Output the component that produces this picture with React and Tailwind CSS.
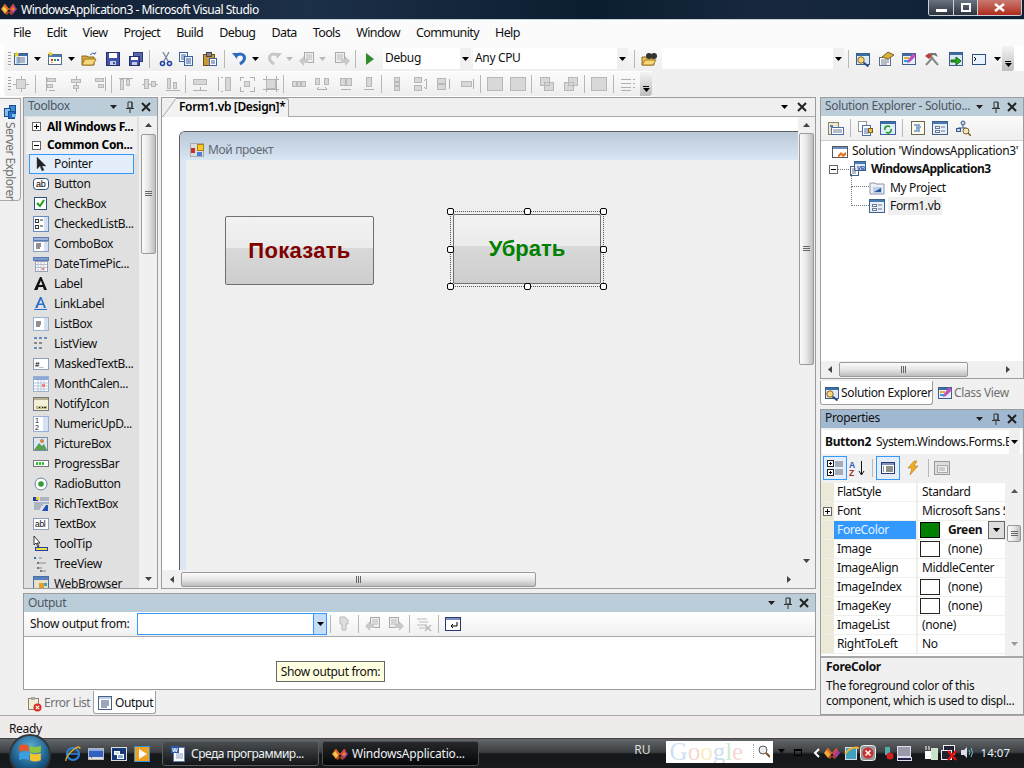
import React from "react";

const S = ({ w = 16, h = 16, children, className = "" }) => (
  <svg width={w} height={h} viewBox={`0 0 ${w} ${h}`} className={`shrink-0 ${className}`}>{children}</svg>
);
const R = (x, y, w, h, f, s) => <rect x={x} y={y} width={w} height={h} fill={f} stroke={s} shapeRendering="crispEdges" />;

const Dn = ({ c = "#000" }) => <S w={7} h={4}><path d="M0 0h7L3.5 4z" fill={c} /></S>;
const Up = ({ c = "#444" }) => <S w={7} h={4}><path d="M0 4h7L3.5 0z" fill={c} /></S>;
const Lf = ({ c = "#444" }) => <S w={4} h={7}><path d="M4 0v7L0 3.5z" fill={c} /></S>;
const Rt = ({ c = "#444" }) => <S w={4} h={7}><path d="M0 0v7l4-3.5z" fill={c} /></S>;
const Pin = () => <S w={10} h={12}><path d="M3 1h4v6H3zM1 7.5h8M5 8v4M7 1v6" stroke="#333" fill="none" strokeWidth="1" /></S>;
const X = () => <S w={10} h={10}><path d="M1 1l8 8M9 1l-8 8" stroke="#222" strokeWidth="2" /></S>;

const Vs = () => (
  <S w={16} h={12}>
    <path d="M0 6l4-5 4 5-4 5z" fill="#f2a93b" />
    <path d="M2 6l2-2.5L6 6l-2 2.5z" fill="#f7d65a" />
    <path d="M8 6l4-5 4 5-4 5z" fill="#a83a9c" />
    <path d="M10 6l2-2.5L14 6l-2 2.5z" fill="#e8871e" />
    <path d="M4 1l8 10-2 1-8-10zM12 1L4 11l2 1 8-10z" fill="#d9541e" opacity=".8" />
  </S>
);

const Win = ({ t = "#3a6ea5", b = "#e8f0fa" }) => <>{R(1.5, 2.5, 13, 11, b, "#3e5f8a")}{R(2, 3, 12, 2, t)}</>;
const Lines = () => <path d="M4 7h8M4 9h8M4 11h8" stroke="#6a7a90" />;

const I = {
  newp: <S><Win />{R(3, 6, 4, 7, "#b8d0ea")}<Lines /><path d="M3 0l1 2 2 0-1 2 1 2-2-1-2 1 0-2-1-1 2-1z" fill="#f5d020" /></S>,
  add: <S>{R(1.5, 3.5, 13, 10, "#fff", "#5a6e88")}{R(2, 4, 12, 2, "#4a7ab0")}{R(4, 8, 2, 2, "#d03030")}{R(7, 8, 2, 2, "#30a030")}{R(10, 8, 2, 2, "#3060d0")}{R(4, 11, 2, 1, "#e0a020")}<path d="M3 0l1 2 2 0-1 2-2 1-1-2-1-1 2-1z" fill="#f5d020" /></S>,
  open: <S><path d="M1 5h5l1 1h6v8H1z" fill="#d9a83a" stroke="#8a6a20" /><path d="M1 14l3-6h11l-3 6z" fill="#f6d77a" stroke="#a07a20" /><path d="M9 4q2-3 5-1M14 3l1-2M14 3l-2-1" stroke="#4a6fa5" fill="none" /></S>,
  save: <S>{R(1.5, 1.5, 13, 13, "#3f51a8", "#24306e")}{R(4, 2, 8, 5, "#fff")}{R(5, 10, 6, 4, "#c6cde0")}{R(8, 11, 2, 2, "#3f51a8")}</S>,
  saveall: <S>{R(5.5, 1.5, 9, 9, "#5a68b0", "#2c3878")}{R(1.5, 5.5, 10, 9, "#3f51a8", "#24306e")}{R(3, 6, 7, 3, "#fff")}{R(4, 11, 5, 3, "#c6cde0")}</S>,
  cut: <S><path d="M5 1l5 9M11 1L6 10" stroke="#7a8aa0" strokeWidth="1.4" /><circle cx="4.5" cy="12.5" r="2" fill="none" stroke="#2040a0" strokeWidth="1.6" /><circle cx="11.5" cy="12.5" r="2" fill="none" stroke="#2040a0" strokeWidth="1.6" /></S>,
  copy: <S>{R(1.5, 1.5, 8, 9, "#fff", "#3a5f9a")}<path d="M3 4h5M3 6h5M3 8h5" stroke="#3a5f9a" />{R(6.5, 5.5, 8, 9, "#eaf2ff", "#3a5f9a")}<path d="M8 8h5M8 10h5M8 12h5" stroke="#3a5f9a" /></S>,
  paste: <S>{R(1.5, 3.5, 11, 11, "#c89a3c", "#6a5020")}{R(4, 1, 5, 4, "#888", "#444")}{R(7.5, 7.5, 7, 7, "#fff", "#3a5f9a")}<path d="M9 10h4M9 12h4" stroke="#3a5f9a" /></S>,
  undo: <S><path d="M3 5q6-4 9 0q2 4-4 8" stroke="#2c6cc0" strokeWidth="3" fill="none" /><path d="M0 2l6 0 -1 6z" fill="#2c6cc0" /></S>,
  redo: <S><path d="M13 5q-6-4-9 0q-2 4 4 8" stroke="#c4c8c8" strokeWidth="3" fill="none" /><path d="M16 2l-6 0 1 6z" fill="#c4c8c8" /></S>,
  back: <S>{R(5.5, 1.5, 9, 10, "#eee", "#aaa")}<path d="M7 4h6M7 6h6M7 8h6" stroke="#bbb" /><path d="M0 10l5-5v3h4v4H5v3z" fill="#c8c8c8" /></S>,
  fwd: <S>{R(1.5, 1.5, 9, 10, "#eee", "#aaa")}<path d="M3 4h6M3 6h6M3 8h6" stroke="#bbb" /><path d="M16 10l-5-5v3H7v4h4v3z" fill="#c8c8c8" /></S>,
  play: <S w={8} h={12}><path d="M0 0l8 6-8 6z" fill="#2e8b2e" /></S>,
  find: <S><path d="M1 6h5l1 1h6v7H1z" fill="#e8c050" stroke="#8a6a20" /><path d="M1 14l3-5h11l-3 5z" fill="#f6d77a" stroke="#a07a20" /><circle cx="8" cy="5" r="3" fill="#333" /><circle cx="13" cy="5" r="3" fill="#333" /></S>,
  sfind: <S><Win />{R(2, 6, 12, 7, "#dce8f8")}<circle cx="6" cy="9" r="3.2" fill="#f6d77a" stroke="#8a6a20" /><path d="M8.5 11.5l5 4" stroke="#2a4a80" strokeWidth="2" /></S>,
  server: <S>{R(7.5, 1.5, 6, 8, "#3a90d8", "#1e4a90")}{R(2.5, 4.5, 6, 8, "#8abce8", "#1e4a90")}{R(6.5, 7.5, 6, 7, "#2a70c0", "#1e4a90")}{R(10, 10, 4, 3, "#7ac0f0")}</S>,
  props: <S>{R(1.5, 6.5, 11, 8, "#fff", "#5a6e88")}<path d="M3 9h8M3 11h8M3 13h6" stroke="#6a7a90" /><path d="M4 6l6-5 6 3-6 4z" fill="#d8b040" stroke="#806020" /></S>,
  tb: <S><Win />{R(3, 6, 5, 2, "#e0b030")}{R(3, 9, 5, 2, "#30a0e0")}<path d="M12 2l3 3-6 6-3 1 1-3z" fill="#c050c0" /></S>,
  tools: <S><path d="M2 14l7-8M14 14L7 6" stroke="#888" strokeWidth="2" /><path d="M6 2h6l2 4-4-2-4 1z" fill="#777" /><path d="M1 5l4-3 3 3-3 3z" fill="#b84030" /></S>,
  immed: <S>{R(1.5, 1.5, 13, 13, "#dce8f8", "#3e5f8a")}{R(2, 2, 12, 2, "#3a6ea5")}<path d="M3 9h5V6l5 4-5 4v-3H3z" fill="#22aa22" stroke="#0a6a0a" /></S>,
  cmd: <S>{R(1.5, 3.5, 13, 10, "#eaf2fc", "#2a4f80")}{R(2, 4, 2, 9, "#fff")}<path d="M3 6l2 2-2 2" stroke="#000" fill="none" /></S>,
  pointer: <S><path d="M4 1v12l3-3 2 5 2-1-2-4h4z" fill="#222" stroke="#555" strokeWidth=".5" /></S>,
  ab: <S><rect x=".5" y="2.5" width="15" height="11" rx="3" fill="#fff" stroke="#2a4a80" /><text x="3" y="11" fontSize="9" fill="#000" fontFamily="Liberation Sans">ab</text></S>,
  check: <S>{R(1.5, 1.5, 12, 12, "#fff", "#2a4f80")}<path d="M4 7l3 3 4-6" stroke="#18a018" strokeWidth="2" fill="none" /></S>,
  clb: <S>{R(.5, .5, 15, 15, "#fff", "#6a8ac0")}{R(2, 3, 3, 3, "#fff", "#333")}{R(2, 9, 3, 3, "#fff", "#333")}{R(11, 1, 4, 14, "#d4e0f4")}<path d="M7 4h3M7 10h3" stroke="#333" /></S>,
  combo: <S>{R(.5, 1.5, 15, 3, "#9ab4dc", "#5a7ab0")}{R(.5, 5.5, 15, 10, "#fff", "#8aa0c0")}<path d="M3 8h5M3 10h5M3 12h4" stroke="#222" />{R(11, 6, 4, 9, "#d4e0f4")}</S>,
  dtp: <S>{R(.5, 1.5, 15, 3, "#7a9ad0", "#5a7ab0")}{R(2.5, 5.5, 12, 10, "#fff", "#9aa0b0")}<path d="M5 6v9M8 6v9M11 6v9M3 8.5h11M3 11.5h11" stroke="#b8c0d0" />{R(9, 12, 2, 2, "#f08070")}</S>,
  label: <S><path d="M1 14L7 1h1.5L14 14h-3l-1-3H5.5l-1 3zM6 9h3.5L8 4.5z" fill="#111" /></S>,
  link: <S><path d="M2 12L7 1h1.5L13 12h-2l-1-3H5.5l-1 3zM6 7.5h3.5L8 3.5z" fill="#2a70c8" />{R(1, 13, 13, 1, "#2a70c8")}</S>,
  listb: <S>{R(.5, 1.5, 15, 13, "#fff", "#9ab0d0")}<path d="M3 6h5M3 8h5M3 10h4" stroke="#222" />{R(11, 2, 4, 12, "#d4e0f4")}</S>,
  listv: <S>{R(1, 1, 3, 2, "#6a8ac0")}{R(6, 1, 3, 2, "#6a8ac0")}{R(11, 1, 3, 2, "#6a8ac0")}{R(1, 6, 3, 2, "#888")}{R(6, 6, 3, 2, "#888")}{R(1, 11, 3, 2, "#6a8ac0")}{R(6, 11, 3, 2, "#888")}</S>,
  mask: <S>{R(.5, 2.5, 15, 11, "#fff", "#8aa0c0")}<text x="2" y="11" fontSize="8" fontWeight="bold" fill="#111" fontFamily="Liberation Sans">#_</text></S>,
  month: <S>{R(.5, .5, 15, 15, "#fff", "#9ab0d0")}{R(1, 1, 14, 3, "#90a8d8")}<path d="M5 4v11M8 4v11M11 4v11M1 7h14M1 10h14M1 13h14" stroke="#b8c4dc" />{R(9, 8, 3, 3, "#f08070")}</S>,
  notify: <S>{R(.5, 1.5, 15, 13, "#f4f0d8", "#777")}{R(1, 2, 14, 2, "#b8b090")}{R(3, 10, 11, 3, "#c0b888")}{R(6, 11, 1, 1, "#222")}{R(9, 11, 1, 1, "#222")}{R(11, 11, 2, 1, "#222")}</S>,
  numeric: <S>{R(.5, .5, 15, 15, "#fff", "#9ab0d0")}<text x="2" y="7" fontSize="7" fill="#111" fontFamily="Liberation Sans">1</text><text x="2" y="14" fontSize="7" fill="#111" fontFamily="Liberation Sans">2</text>{R(10, 1, 5, 14, "#d4e0f4")}</S>,
  pic: <S>{R(.5, 1.5, 14, 13, "#d8e8f4", "#7a8aa0")}<path d="M1 14l5-7 3 3 2-2 3 6z" fill="#5aa050" /><circle cx="9" cy="5" r="2" fill="#e08040" /></S>,
  prog: <S>{R(.5, 4.5, 15, 6, "#fff", "#777")}{R(3, 6, 2, 3, "#30c030")}{R(6, 6, 2, 3, "#30c030")}{R(9, 6, 2, 3, "#30c030")}</S>,
  radio: <S><circle cx="8" cy="8" r="6" fill="#fff" stroke="#6a80a0" /><circle cx="8" cy="8" r="2.8" fill="#30a030" /></S>,
  rich: <S>{R(0, 1, 5, 4, "#2040a0")}{R(3, 1, 3, 3, "#f0d020")}<path d="M7 2h9M7 4h9M1 7h15M1 9h9M1 11h7M1 13h6" stroke="#7a8aa8" /><path d="M9 15l4-6h2v6z" fill="#2050b0" /></S>,
  text: <S>{R(.5, 2.5, 15, 11, "#fff", "#8aa0c0")}<text x="2" y="11" fontSize="8.5" fill="#111" fontFamily="Liberation Sans">abl</text></S>,
  tip: <S><path d="M1 0v9l2-2 2 4 1-1-2-3h3z" fill="#fff" stroke="#111" strokeWidth=".8" />{R(2.5, 11.5, 12, 3, "#f0e040", "#2040a0")}</S>,
  tree: <S>{R(1, 1, 2, 2, "#3a6ab0")}<path d="M6 2h3M6 7h7M6 12h3M9 15h4" stroke="#888" />{R(4, 6, 2, 2, "#778")}{R(4, 11, 2, 2, "#778")}{R(7, 14, 2, 2, "#778")}</S>,
  web: <S>{R(.5, .5, 15, 15, "#e8e0c8", "#4a6fa5")}{R(1, 1, 14, 3, "#5a80c0")}{R(6, 7, 5, 6, "#e0a030")}{R(11, 7, 3, 3, "#40a0d0")}</S>,
  slnp: <S>{R(.5, 2.5, 10, 12, "#f0e8c8", "#8a8468")}{R(2, 5, 3, 2, "#5a80c0")}{R(3.5, 7.5, 12, 7, "#fff", "#4a6fa5")}<path d="M5 10h9M5 12h9" stroke="#6a7a90" /></S>,
  showall: <S>{R(1.5, 1.5, 8, 10, "#fff", "#999")}{R(5.5, 5.5, 8, 10, "#fff", "#4a6fa5")}<path d="M7 9h5M7 11h5M7 13h5" stroke="#4a6fa5" />{R(11, 8, 4, 4, "#e8c050", "#806020")}</S>,
  refresh: <S>{R(.5, 1.5, 15, 13, "#e0ecf8", "#3a5f9a")}{R(1, 2, 14, 2, "#3a6ea5")}<path d="M5 10a3 3 0 0 1 5-3M11 9a3 3 0 0 1-5 3" stroke="#20a020" strokeWidth="1.6" fill="none" /></S>,
  code: <S>{R(1.5, 1.5, 13, 13, "#fdf8e8", "#6a6a50")}<path d="M4 5h6M6 7h5M6 9h4M4 11h6" stroke="#2060c0" /></S>,
  form: <S>{R(.5, 1.5, 15, 13, "#e8eef8", "#3e5f8a")}{R(1, 2, 14, 2, "#4a7ab0")}{R(3, 6, 4, 2, "#fff", "#6a7a90")}{R(3, 10, 4, 2, "#fff", "#6a7a90")}<path d="M9 7h4M9 11h4" stroke="#6a7a90" /></S>,
  cls: <S><circle cx="8" cy="3" r="2" fill="#c8d4e8" stroke="#3a5a90" />{R(1, 8, 4, 3, "#c8d4e8", "#3a5a90")}<path d="M8 5v3H3M8 8h3" stroke="#3a5a90" fill="none" /><circle cx="11" cy="11" r="3" fill="#f0e8c0" stroke="#806020" /><path d="M13 13l3 3" stroke="#806020" strokeWidth="1.5" /></S>,
  sln: <S>{R(.5, 3.5, 15, 11, "#fff", "#555")}{R(1, 4, 14, 2, "#6a90c8")}<path d="M6 12l3-3 2 2 3-2v3l-3 2-2-2-3 3z" fill="#e0701e" /></S>,
  proj: <S>{R(.5, 5.5, 8, 9, "#fff", "#3e5f8a")}{R(4.5, .5, 11, 9, "#dce8f8", "#3e5f8a")}{R(5, 1, 10, 2, "#4a7ab0")}<text x="7" y="9" fontSize="6" fontWeight="bold" fill="#2040a0" fontFamily="Liberation Sans">VB</text><path d="M2 8h4M2 10h4M2 12h4" stroke="#6a7a90" /></S>,
  myp: <S><path d="M1 3h5l1 1h8v10H1z" fill="#eef0f4" stroke="#8a94a8" />{R(4, 7, 9, 6, "#bcd0ea")}<path d="M5 12l7-4v4z" fill="#2a5aa0" /></S>,
  cat: <S>{R(.5, .5, 6, 6, "#fff", "#222")}{R(.5, 9.5, 6, 6, "#fff", "#222")}{R(2, 3, 3, 1, "#000")}{R(3, 2, 1, 3, "#000")}{R(2, 12, 3, 1, "#000")}{R(3, 11, 1, 3, "#000")}<path d="M8 2h8M8 4h8M8 6h8M8 10h8M8 12h8M8 14h8" stroke="#667" /></S>,
  az: <S><text x="0" y="7.5" fontSize="8.5" fontWeight="bold" fill="#2a5ab8" fontFamily="Liberation Sans">A</text><text x="0" y="15.5" fontSize="8.5" fontWeight="bold" fill="#a03020" fontFamily="Liberation Sans">Z</text><path d="M12.5 1v13M10 11l2.5 4 2.5-4" stroke="#111" fill="none" /></S>,
  plist: <S>{R(1.5, 2.5, 13, 11, "#fff", "#2a3a70")}{R(2, 3, 12, 2, "#7a90c0")}<path d="M6 7h7M6 9h7M6 11h7M3 7h1M3 9h1M3 11h1" stroke="#222" /></S>,
  bolt: <S><path d="M9 1L3 8h4l-2 7 8-9H9l3-5z" fill="#e8b020" stroke="#c07020" strokeWidth=".6" /></S>,
  ppage: <S>{R(.5, 1.5, 15, 13, "#ddd", "#999")}{R(3, 5, 10, 7, "#eee", "#aaa")}<path d="M5 8h6M5 10h6" stroke="#aaa" /></S>,
  errl: <S>{R(2.5, 2.5, 10, 11, "#f2ecd8", "#8a8468")}{R(5, 1, 4, 3, "#aaa")}<circle cx="11.5" cy="11.5" r="4" fill="#d83020" /><path d="M9.8 9.8l3.4 3.4M13.2 9.8l-3.4 3.4" stroke="#fff" strokeWidth="1.2" /></S>,
  outp: <S>{R(1.5, 1.5, 13, 13, "#fff", "#4a5f88")}{R(2, 2, 12, 2, "#bcd0ea")}<path d="M4 6h8M4 8h8M4 10h8M4 12h6" stroke="#3a4a78" /></S>,
  o1: <S><path d="M4 1h5l3 3v4h-2v6H6V8H4z" fill="#ddd" stroke="#bbb" /></S>,
  o4: <S><path d="M1 3h10M3 6h9M1 9h10M3 12h8" stroke="#bbb" /><path d="M9 9l6 6M15 9l-6 6" stroke="#bbb" strokeWidth="1.6" /></S>,
  o5: <S>{R(.5, 1.5, 15, 13, "#fff", "#2a3a70")}{R(1, 2, 14, 2, "#7a90c0")}<path d="M12 6v4H6M8 8l-2 2 2 2" stroke="#000" fill="none" /></S>,
  word: <S>{R(2.5, 1.5, 11, 14, "#fff", "#5a7ab0")}<path d="M5 8h7M5 10h7M5 12h7" stroke="#8a9ab8" />{R(0, 0, 8, 7, "#2a5ab0")}<text x="1" y="6" fontSize="6" fontWeight="bold" fill="#fff" fontFamily="Liberation Sans">W</text></S>,
  ie: <S><ellipse cx="8" cy="8" rx="6" ry="6" fill="none" stroke="#2a80d8" strokeWidth="2.2" /><path d="M2 8h11" stroke="#2a80d8" strokeWidth="1.6" /><path d="M1 15Q0 11 9 3Q15-1 15 3" stroke="#e8b020" fill="none" strokeWidth="1.3" /></S>,
  desk: <S>{R(.5, 1.5, 15, 13, "#163a78", "#ddd")}{R(3, 5, 5, 3, "#cde", "#fff")}{R(6, 8, 6, 4, "#8ac", "#fff")}</S>,
  sw: <S>{R(.5, 2.5, 15, 11, "#3060c0", "#bbb")}{R(1, 3, 14, 2, "#88aae0")}{R(1, 11, 14, 2, "#ddd")}{R(3, 11, 1, 1, "#c33")}</S>,
  wmp: <S>{R(.5, .5, 15, 15, "#f0a020", "#3a90d0")}<path d="M5 3l8 5-8 5z" fill="#fff" /></S>,
  traya: <S><path d="M0 8l4-5 4 5-4 5z" fill="#f2a93b" /><path d="M8 8l4-5 4 5-4 5z" fill="#a83a9c" /><path d="M4 3l8 10-2 1-8-10zM12 3L4 13l2 1 8-10z" fill="#d9541e" opacity=".8" /></S>,
  trayb: <S>{R(2, 2, 11, 12, "#40a0c0", "#ddd")}<path d="M2 9q6-8 14-6" stroke="#f0b030" strokeWidth="2" fill="none" /></S>,
  trayc: <S><rect x=".5" y=".5" width="15" height="15" rx="3" fill="#999" stroke="#eee" /><circle cx="8" cy="8" r="5.5" fill="#c83030" /><path d="M5.5 5.5l5 5M10.5 5.5l-5 5" stroke="#fff" strokeWidth="1.5" /></S>,
  trayd: <S w={11}><path d="M2 2h5v8H2z" fill="#5aa" /><circle cx="7" cy="11" r="3.5" fill="#d02020" /></S>,
  traye: <S>{R(1.5, 1.5, 13, 10, "#99a", "#dde")}{R(1, 12, 14, 3, "#224", "#dde")}</S>,
  trayf: <S><path d="M3 1v4M6 1v4" stroke="#fff" />{R(1.5, 5.5, 7, 8, "#fff")}{R(8.5, 3.5, 6, 11, "#bfe8c0", "#ddd")}</S>,
  trayg: <S>{R(2.5, .5, 11, 9, "#223", "#eee")}{R(.5, 5.5, 10, 9, "#223", "#eee")}<path d="M7 6l8 9M15 6l-8 9" stroke="#e01010" strokeWidth="2.4" /></S>,
  trayh: <S w={14}><path d="M1 5h3l3-3v11l-3-3H1z" fill="#dde" /><path d="M9 5q2 2.5 0 5M11 3q3 4.5 0 9" stroke="#6ac0d0" fill="none" /></S>,
};

const Gr = ({ a, b }) => (
  <S>
    {a && <path d={a} stroke="#b0b0b0" fill="none" shapeRendering="crispEdges" />}
    {b && <path d={b} fill="#d8d8d8" stroke="#b8b8b8" shapeRendering="crispEdges" />}
  </S>
);
const G = {
  a: <Gr a="M8 0v16M0 8h16" b="M3.5 3.5h9v9h-9z" />,
  l: <Gr a="M2 1v14M5 14h6" b="M3.5 2.5h8v3h-8zM3.5 8.5h5v3h-5z" />,
  c: <Gr a="M8 0v16" b="M3.5 3.5h9v3h-9zM5.5 9.5h5v3h-5z" />,
  r: <Gr a="M14 1v14" b="M4.5 2.5h8v3h-8zM7.5 8.5h5v3h-5z" />,
  t: <Gr a="M1 2h14" b="M2.5 3.5h3v10h-3zM8.5 3.5h3v6h-3z" />,
  m: <Gr a="M0 8h16" b="M2.5 3.5h4v9h-4zM9.5 5.5h4v5h-4z" />,
  o: <Gr a="M1 14h14" b="M2.5 2.5h3v10h-3zM8.5 6.5h3v6h-3z" />,
  w: <Gr a="M1 14h14M8 11v4" b="M1.5 3.5h13v5h-13z" />,
  h: <Gr a="M2 1v14M5 1h2M5 15h2" b="M9.5 1.5h5v13h-5z" />,
  s: <Gr a="M1 1h4M1 1v4M11 1h4M15 1v4M1 11v4h4M15 11v4h-4" b="M5.5 5.5h5v5h-5z" />,
  b: <Gr a="M0 3h16M0 13h16M3 0v16M13 0v16" b="M3.5 3.5h9v9h-9z" />,
  e1: <Gr b="M1.5 5.5h4v5h-4zM6.5 5.5h3v5h-3zM10.5 5.5h4v5h-4z" />,
  e2: <Gr a="M3 13h10M3 13l2-2M13 13l-2-2" b="M1.5 2.5h4v6h-4zM10.5 2.5h4v6h-4z" />,
  e3: <Gr a="M3 13h10" b="M2.5 2.5h5v7h-5zM8.5 2.5h5v7h-5z" />,
  e4: <Gr a="M3 13h10" b="M5.5 1.5h5v9h-5z" />,
  v1: <Gr b="M5.5 1.5h5v4h-5zM5.5 6.5h5v3h-5zM5.5 10.5h5v4h-5z" />,
  v2: <Gr a="M13 3v10M13 3l-2 2M13 13l-2-2" b="M1.5 1.5h7v5h-7zM1.5 9.5h7v5h-7z" />,
  v3: <Gr a="M13 3v10" b="M1.5 2.5h8v5h-8zM1.5 8.5h8v5h-8z" />,
  v4: <Gr a="M13 3v10" b="M1.5 5.5h10v5h-10z" />,
  p1: <Gr a="M0 8h16" b="M.5 1.5h15v13h-15z" />,
  p2: <Gr a="M8 1v14M0 8h16" b="M.5 1.5h15v13h-15z" />,
  f1: <Gr b="M1.5 1.5h9v8h-9zM5.5 6.5h9v8h-9z" />,
  f2: <Gr b="M5.5 1.5h9v8h-9zM1.5 6.5h9v8h-9z" />,
  g: <Gr a="M1 5h14M1 8h14M1 11h14" b="M.5 1.5h15v13h-15z" />,
  n: <Gr a="M1 3h10M1 7h10M1 11h10M1 14h10M13 3h2M13 7h2M13 11h2" />,
};

const Sep = ({ c = "" }) => <div className={`w-px h-[18px] bg-[#b8b8b8] shrink-0 ${c}`} />;
const Grip = () => (
  <div className="w-[3px] h-[14px] shrink-0 bg-[repeating-linear-gradient(180deg,#a0a0a0_0,#a0a0a0_1px,transparent_1px,transparent_3px)]" />
);
const More = ({ c = "" }) => (
  <div className={`w-[12px] self-stretch rounded-r-[3px] bg-linear-to-b from-[#f4f4f4] to-[#bdbdbd] flex flex-col items-center justify-end pb-[4px] shrink-0 ${c}`}>
    <div className="w-[6px] h-px bg-black mb-px" />
    <Dn />
  </div>
);

const Combo = ({ w, label, c = "" }) => (
  <div className={`h-[21px] bg-white flex items-center shrink-0 ${w} ${c}`}>
    <span className="flex-1 pl-[2px] text-[12px] -mt-[2px]">{label}</span>
    <div className="w-[11px] h-full bg-[#f0f0f0] flex items-center justify-center"><Dn /></div>
  </div>
);

function TitleBar() {
  return (
    <div className="h-[20px] shrink-0 flex items-start bg-[linear-gradient(90deg,#101c30,#1c3048_30%,#0b1d30_58%,#18293f_75%,#0c1f34)] border-b border-[#c9d3dc] text-white">
      <div className="pl-px pt-[3px]"><Vs /></div>
      <span className="ml-[4px] text-[12px] tracking-[-0.5px] leading-[19px]">WindowsApplication3 - Microsoft Visual Studio</span>
      <div className="ml-auto mr-[2px] flex h-[16px] w-[94px] rounded-b-[3px] border border-t-0 border-[#c8d0d8] overflow-hidden">
        <div className="w-[25px] bg-linear-to-b from-[#6a7480] to-[#2c3440] flex items-end justify-center pb-[3px] border-r border-[#c8d0d8]"><div className="w-[11px] h-[3px] bg-white" /></div>
        <div className="w-[24px] bg-linear-to-b from-[#6a7480] to-[#2c3440] flex items-center justify-center border-r border-[#c8d0d8]"><div className="w-[10px] h-[9px] border-2 border-white" /></div>
        <div className="flex-1 bg-linear-to-b from-[#c87870] to-[#b02818] flex items-center justify-center"><S w={11} h={9}><path d="M1 1l9 7M10 1l-9 7" stroke="#fff" strokeWidth="2.4" /></S></div>
      </div>
    </div>
  );
}

function MenuBar() {
  return (
    <div className="h-[26px] shrink-0 bg-[#fbfbfb] flex items-center pl-[13px] gap-[16px] text-[12.5px] tracking-[-0.6px] text-[#111] pt-px">
      {["File", "Edit", "View", "Project", "Build", "Debug", "Data", "Tools", "Window", "Community", "Help"].map((m) => <span key={m}>{m}</span>)}
    </div>
  );
}

function Toolbar1() {
  return (
    <div className="h-[25px] shrink-0 bg-white pl-[4px] pr-[10px]">
      <div className="h-full flex items-center pl-[4px] rounded-l-[3px] bg-linear-to-b from-[#fbfbfb] to-[#eeeeee]">
        <Grip />
        <span className="ml-[2px]">{I.newp}</span>
        <span className="ml-[5px]"><Dn /></span>
        <span className="ml-[6px]">{I.add}</span>
        <span className="ml-[5px]"><Dn /></span>
        <span className="ml-[6px]">{I.open}</span>
        <span className="ml-[8px]">{I.save}</span>
        <span className="ml-[7px]">{I.saveall}</span>
        <Sep c="ml-[5px]" />
        <span className="ml-[8px]">{I.cut}</span>
        <span className="ml-[4px]">{I.copy}</span>
        <span className="ml-[8px]">{I.paste}</span>
        <Sep c="ml-[6px]" />
        <span className="ml-[7px]">{I.undo}</span>
        <span className="ml-[4px]"><Dn /></span>
        <span className="ml-[7px]">{I.redo}</span>
        <span className="ml-[4px]"><Dn c="#bbb" /></span>
        <span className="ml-[6px]">{I.back}</span>
        <span className="ml-[4px]"><Dn c="#bbb" /></span>
        <span className="ml-[8px]">{I.fwd}</span>
        <Sep c="ml-[5px]" />
        <span className="ml-[10px]">{I.play}</span>
        <Combo w="w-[88px]" label="Debug" c="ml-[9px]" />
        <Combo w="w-[155px]" label="Any CPU" c="ml-[2px]" />
        <Sep c="ml-[6px]" />
        <span className="ml-[6px]">{I.find}</span>
        <Combo w="w-[182px]" label="" c="ml-[5px]" />
        <Sep c="ml-[4px]" />
        <span className="ml-[6px]">{I.sfind}</span>
        <span className="ml-[7px]">{I.props}</span>
        <span className="ml-[7px]">{I.tb}</span>
        <span className="ml-[7px]">{I.tools}</span>
        <span className="ml-[8px]">{I.immed}</span>
        <span className="ml-[7px]">{I.cmd}</span>
        <span className="ml-[7px]"><Dn /></span>
        <More c="ml-auto" />
      </div>
    </div>
  );
}

const Group = ({ items }) => <div className="flex gap-[7.5px] shrink-0">{items.map((k, i) => <span key={i}>{G[k]}</span>)}</div>;

function Toolbar2() {
  return (
    <div className="h-[26px] shrink-0 bg-white pl-[4px] w-[652px] pt-[1px]">
      <div className="h-[24px] flex items-center pl-[4px] rounded-[3px] bg-linear-to-b from-[#fbfbfb] to-[#eeeeee]">
        <Grip />
        <span className="ml-[2px]"><Group items={["a"]} /></span>
        <Sep c="ml-[6px] mr-[8px]" />
        <Group items={["l", "c", "r"]} />
        <Sep c="ml-[4px] mr-[6px]" />
        <Group items={["t", "m", "o"]} />
        <Sep c="ml-[4px] mr-[6px]" />
        <Group items={["w", "h", "s", "b"]} />
        <Sep c="ml-[4px] mr-[7px]" />
        <Group items={["e1", "e2", "e3", "e4"]} />
        <Sep c="ml-[4px] mr-[7px]" />
        <Group items={["v1", "v2", "v3", "v4"]} />
        <Sep c="ml-[4px] mr-[6px]" />
        <Group items={["p1", "p2"]} />
        <Sep c="ml-[5px] mr-[7px]" />
        <Group items={["f1", "f2"]} />
        <Sep c="ml-[5px] mr-[6px]" />
        <Group items={["g"]} />
        <Sep c="ml-[6px] mr-[6px]" />
        <Group items={["n"]} />
        <More c="ml-auto" />
      </div>
    </div>
  );
}

const Header = ({ title, active, arrow = true, t = "-mt-[2px]" }) => (
  <div className={`h-[18px] shrink-0 flex items-center pl-[4px] text-[12px] ${active ? "bg-[#a0b8d0] text-[#111]" : "bg-[#bccdda] text-[#4c5763]"}`}>
    <span className={`flex-1 min-w-0 whitespace-nowrap ${t}`}>{title}</span>
    {arrow && <Dn c="#222" />}
    <span className="ml-[8px]"><Pin /></span>
    <span className="ml-[6px] mr-[6px]"><X /></span>
  </div>
);

const Thumb = "bg-linear-to-r from-[#fbfbfb] via-[#e6e6e6] to-[#bdbdbd] border border-[#9a9a9a] rounded-[2px]";
const ThumbH = "bg-linear-to-b from-[#fbfbfb] via-[#e6e6e6] to-[#bdbdbd] border border-[#9a9a9a] rounded-[2px]";
const GripV = () => <div className="w-[7px] h-[6px] bg-[repeating-linear-gradient(180deg,#666_0,#666_1px,transparent_1px,transparent_2px)]" />;
const GripH = () => <div className="w-[6px] h-[7px] bg-[repeating-linear-gradient(90deg,#666_0,#666_1px,transparent_1px,transparent_2px)]" />;

const toolbox = [
  ["pointer", "Pointer"], ["ab", "Button"], ["check", "CheckBox"], ["clb", "CheckedListB..."], ["combo", "ComboBox"],
  ["dtp", "DateTimePic..."], ["label", "Label"], ["link", "LinkLabel"], ["listb", "ListBox"], ["listv", "ListView"],
  ["mask", "MaskedTextB..."], ["month", "MonthCalen..."], ["notify", "NotifyIcon"], ["numeric", "NumericUpD..."],
  ["pic", "PictureBox"], ["prog", "ProgressBar"], ["radio", "RadioButton"], ["rich", "RichTextBox"], ["text", "TextBox"],
  ["tip", "ToolTip"], ["tree", "TreeView"], ["web", "WebBrowser"],
];

const Expander = ({ open }) => (
  <div className="relative w-[9px] h-[9px] border border-[#666] bg-white shrink-0 flex items-center justify-center">
    <div className="w-[5px] h-px bg-black" />
    {!open && <div className="absolute w-px h-[5px] bg-black" />}
  </div>
);

function Toolbox() {
  return (
    <div className="w-[135px] shrink-0 border border-[#9c9c9c] flex flex-col bg-[#f0f0f0] overflow-hidden">
      <Header title="Toolbox" />
      <div className="flex flex-1 min-h-0">
        <div className="w-[115px] shrink-0 bg-[#e0e0e0] overflow-hidden flex flex-col">
          <div className="h-[19px] bg-[#efefef] flex items-center pl-[6px] mx-[2px] mt-px shrink-0">
            <Expander /><span className="ml-[6px] font-bold text-[12px] whitespace-nowrap text-black">All Windows F...</span>
          </div>
          <div className="h-[18px] bg-[#efefef] flex items-center pl-[6px] mx-[2px] shrink-0">
            <Expander open /><span className="ml-[6px] font-bold text-[12px] whitespace-nowrap text-black">Common Con...</span>
          </div>
          {toolbox.map(([k, t], i) => (
            <div key={t} className={`h-[20px] shrink-0 flex items-center text-[12px] whitespace-nowrap text-[#111] ${i === 0 ? "mx-[5px] pl-[3px] border border-[#3399ff] bg-[#e3eefa]" : "pl-[9px]"}`}>
              {I[k]}<span className="ml-[5px]">{t}</span>
            </div>
          ))}
        </div>
        <div className="w-[18px] flex flex-col items-center">
          <div className="h-[18px] flex items-center"><Up /></div>
          <div className={`w-[15px] h-[120px] flex items-center justify-center ${Thumb}`}><GripV /></div>
          <div className="flex-1" />
          <div className="h-[18px] flex items-center"><Dn c="#444" /></div>
        </div>
      </div>
    </div>
  );
}

const Handle = ({ c }) => <div className={`absolute w-[7px] h-[7px] bg-white border border-black rounded-[2px] ${c}`} />;

function Designer() {
  return (
    <div className="flex-1 min-w-0 bg-white pt-[14px] pl-[17px] overflow-hidden">
      <div className="h-full border-l border-t border-[#606060] rounded-tl-[6px] overflow-hidden flex flex-col">
        <div className="h-[28px] shrink-0 flex items-center pl-[10px] pt-[7px] bg-linear-to-b from-[#b9c8d8] to-[#d8e5f3]">
          <S w={14} h={14}>{R(.5, .5, 13, 13, "#dcdcdc", "#aaa")}{R(7, 1, 6, 6, "#f5c830", "#b08010")}{R(1, 5, 4, 5, "#c83030")}{R(7, 9, 5, 4, "#4a80d8")}</S>
          <span className="ml-[4px] text-[12px] text-[#5f6870]">Мой проект</span>
        </div>
        <div className="flex-1 border-l-[6px] border-[#dce7f4] bg-[#efefef] relative">
          <div className="absolute left-[39px] top-[56px] w-[149px] h-[69px] border border-[#707070] rounded-[2px] flex items-center justify-center bg-[linear-gradient(180deg,#f2f2f2,#ebebeb_46%,#d9d9d9_46%,#cdcdcd)] [font-family:'Liberation_Sans',sans-serif] font-bold text-[22px] tracking-[0.3px] text-[#800000]">Показать</div>
          <div className="absolute left-[267px] top-[54px] w-[148px] h-[70px] border border-[#707070] rounded-[2px] flex items-center justify-center pb-[2px] bg-[linear-gradient(180deg,#f2f2f2,#ebebeb_46%,#d9d9d9_46%,#cdcdcd)] [font-family:'Liberation_Sans',sans-serif] font-bold text-[22px] tracking-normal text-[#008000]">Убрать</div>
          <div className="absolute left-[264px] top-[51px] w-[154px] h-[76px] border border-dotted border-[#555]" />
          <Handle c="left-[261px] top-[48px]" />
          <Handle c="left-[338px] top-[48px]" />
          <Handle c="left-[414px] top-[48px]" />
          <Handle c="left-[261px] top-[86px]" />
          <Handle c="left-[414px] top-[86px]" />
          <Handle c="left-[261px] top-[123px]" />
          <Handle c="left-[338px] top-[123px]" />
          <Handle c="left-[414px] top-[123px]" />
        </div>
      </div>
    </div>
  );
}

function Document() {
  return (
    <div className="flex-1 min-w-0 ml-[3px] border border-[#9c9c9c] flex flex-col bg-[#f0f0f0]">
      <div className="h-[19px] shrink-0 flex items-end border-b border-[#a8a8a8] bg-[#efefef]">
        <div className="flex items-stretch h-[19px] -mb-px shrink-0">
          <S w={17} h={19}><path d="M0 18.5h1L14 .5h3v19H0z" fill="#f2f2f2" /><path d="M0 18.5h1L14 .5h3" stroke="#a8a8a8" fill="none" /></S>
          <div className="w-[110px] flex items-center text-[12px] font-semibold text-black whitespace-nowrap bg-[#f2f2f2] border-t border-r border-[#a8a8a8] rounded-tr-[3px] pb-[3px]">Form1.vb [Design]*</div>
        </div>
        <div className="ml-auto self-center flex items-center pr-[8px] gap-[9px]"><Dn /><X /></div>
      </div>
      <div className="flex-1 min-h-0 flex">
        <Designer />
        <div className="w-[17px] bg-[#f0f0f0] flex flex-col items-center shrink-0">
          <div className="h-[16px] flex items-center"><Up /></div>
          <div className={`w-[15px] h-[232px] flex items-center justify-center ${Thumb}`}><GripV /></div>
          <div className="flex-1" />
          <div className="h-[18px] flex items-center"><Dn c="#444" /></div>
        </div>
      </div>
      <div className="h-[18px] shrink-0 flex items-center bg-[#f0f0f0]">
        <div className="w-[19px] flex justify-center"><Lf /></div>
        <div className={`w-[355px] h-[15px] flex items-center justify-center ${ThumbH}`}><GripH /></div>
        <div className="flex-1" />
        <div className="w-[33px] pl-[5px]"><Rt /></div>
      </div>
    </div>
  );
}

function Output() {
  return (
    <div className="h-[97px] mt-[4px] shrink-0 border border-[#9c9c9c] flex flex-col relative bg-white">
      <Header title="Output" t="-mt-px" />
      <div className="h-[25px] shrink-0 flex items-center border-b border-[#a8a8a8] bg-linear-to-b from-[#ffffff] to-[#f0f0f0] pl-[6px] text-[12px] text-[#111]">
        <span className="w-[107px]">Show output from:</span>
        <div className="w-[190px] h-[22px] flex border border-[#3399ff] bg-white">
          <div className="flex-1" />
          <div className="w-[13px] bg-[#c5def5] border-l border-[#3399ff] flex items-center justify-center"><Dn /></div>
        </div>
        <Sep c="ml-[3px]" />
        <span className="ml-[5px]">{I.o1}</span>
        <Sep c="ml-[6px]" />
        <span className="ml-[6px]">{I.back}</span>
        <span className="ml-[7px]">{I.fwd}</span>
        <Sep c="ml-[5px]" />
        <span className="ml-[6px]">{I.o4}</span>
        <Sep c="ml-[6px]" />
        <span className="ml-[6px]">{I.o5}</span>
      </div>
      <div className="absolute left-[252px] top-[67px] w-[109px] h-[21px] bg-[#ffffe1] border border-[#666] flex items-center justify-center text-[12px] text-[#111] whitespace-nowrap">Show output from:</div>
    </div>
  );
}

function OutputTabs() {
  return (
    <div className="h-[24px] shrink-0 flex items-start pl-px text-[12px] mt-px">
      <div className="w-[69px] h-[23px] flex items-center pl-[2px] pt-[2px] text-[#707070] whitespace-nowrap">{I.errl}<span className="ml-[2px] tracking-[-0.5px] -mt-[1px]">Error List</span></div>
      <div className="w-[63px] h-[23px] flex items-center pl-[3px] pt-[2px] bg-white border border-t-0 border-[#a0a0a0] rounded-b-[3px] text-[#111]">{I.outp}<span className="ml-[2px] -mt-[1px]">Output</span></div>
    </div>
  );
}

function SolutionExplorer() {
  return (
    <div className="h-[282px] shrink-0 border border-[#9c9c9c] flex flex-col bg-white">
      <Header title="Solution Explorer - Solutio..." />
      <div className="h-[24px] shrink-0 bg-linear-to-b from-[#fbfbfb] to-[#efefef] flex items-center pl-[7px]">
        {I.slnp}
        <Sep c="ml-[6px]" />
        <span className="ml-[6px]">{I.showall}</span>
        <span className="ml-[7px]">{I.refresh}</span>
        <Sep c="ml-[6px]" />
        <span className="ml-[7px]">{I.code}</span>
        <span className="ml-[6px]">{I.form}</span>
        <span className="ml-[7px]">{I.cls}</span>
      </div>
      <div className="flex-1 min-h-0 relative text-[12px] text-[#111] whitespace-nowrap overflow-hidden border-t border-[#cfcfcf] pt-px">
        <div className="h-[18px] flex items-center pl-[11px]">{I.sln}<span className="ml-[4px]">Solution 'WindowsApplication3'</span></div>
        <div className="h-[18px] flex items-center pl-[8px]">
          <Expander open />
          <div className="w-[11px] border-t border-dotted border-[#777]" />
          <span className="ml-px">{I.proj}</span>
          <span className="ml-[5px] font-bold tracking-[-0.5px]">WindowsApplication3</span>
        </div>
        <div className="h-[19px] flex items-center pl-[48px]">{I.myp}<span className="ml-[5px]">My Project</span></div>
        <div className="h-[18px] flex items-center pl-[48px]">{I.form}<span className="ml-[3px] px-[2px] bg-[#f0f0f0]">Form1.vb</span></div>
        <div className="absolute left-[30px] top-[33px] w-[18px] h-[13px] border-l border-b border-dotted border-[#777]" />
        <div className="absolute left-[30px] top-[46px] w-[18px] h-[19px] border-l border-b border-dotted border-[#777]" />
      </div>
      <div className="h-[17px] shrink-0 flex items-center bg-[#f0f0f0]">
        <div className="w-[18px] flex justify-center"><Lf /></div>
        <div className={`w-[129px] h-[15px] flex items-center justify-center ${ThumbH}`}><GripH /></div>
        <div className="flex-1" />
        <div className="w-[17px]"><Rt /></div>
      </div>
    </div>
  );
}

const PTabs = () => (
  <div className="h-[26px] shrink-0 flex items-start text-[12px] mt-[2px]">
    <div className="w-[113px] h-[24px] flex items-center pl-[3px] bg-white border border-t-0 border-[#a0a0a0] rounded-b-[3px] text-[#111] whitespace-nowrap">{I.sfind}<span className="ml-px">Solution Explorer</span></div>
    <div className="ml-[4px] flex items-center h-[24px] text-[#707070] whitespace-nowrap">{I.tb}<span className="ml-px">Class View</span></div>
  </div>
);

const Sw = () => <div className="w-[20px] h-[16px] bg-white border border-[#222] shrink-0" />;
const rows = [
  ["FlatStyle", "Standard"], ["Font", "Microsoft Sans S", "exp"], ["ForeColor", "Green", "sel"], ["Image", "(none)", "sw"], ["ImageAlign", "MiddleCenter"],
  ["ImageIndex", "(none)", "sw"], ["ImageKey", "(none)", "sw"], ["ImageList", "(none)"], ["RightToLeft", "No"],
];

function Properties() {
  return (
    <div className="flex-1 min-h-0 mt-[2px] border border-[#9c9c9c] flex flex-col bg-[#f0f0f0] text-[12px] text-[#111]">
      <Header title="Properties" active />
      <div className="h-[24px] mt-[2px] mx-px bg-white flex items-center pl-[3px] whitespace-nowrap overflow-hidden shrink-0">
        <span className="font-bold">Button2</span>
        <span className="ml-[5px] w-[135px] overflow-hidden">System.Windows.Forms.Button</span>
        <div className="w-[11px] h-full bg-[#efefef] flex items-center justify-center ml-auto mr-[2px]"><Dn /></div>
      </div>
      <div className="h-[26px] mt-[1px] shrink-0 flex items-center pl-[2px]">
        <span className="w-[24px] h-[24px] border border-[#3399ff] bg-[#e3eefa] flex items-center justify-center">{I.cat}</span>
        <span className="ml-[2px]">{I.az}</span>
        <Sep c="ml-[7px]" />
        <span className="ml-[3px] w-[24px] h-[24px] border border-[#3399ff] bg-[#e3eefa] flex items-center justify-center">{I.plist}</span>
        <span className="ml-[5px]">{I.bolt}</span>
        <Sep c="ml-[7px]" />
        <span className="ml-[5px]">{I.ppage}</span>
      </div>
      <div className="h-[173px] mt-[2px] shrink-0 flex">
        <div className="w-[184px] bg-white flex flex-col shrink-0">
          {rows.map(([n, v, m]) => (
            <div key={n} className="h-[19px] flex border-b border-[#f0f0ea] shrink-0 whitespace-nowrap overflow-hidden">
              <div className="w-[13px] bg-[#ece9d8] flex items-center justify-center shrink-0">{m === "exp" && <Expander />}</div>
              <div className={`w-[84px] pl-[3px] leading-[18px] shrink-0 border-r-2 border-[#f0f0ea] ${m === "sel" ? "bg-[#3399ff] text-[#e6f2ff]" : ""}`}>{n}</div>
              <div className="flex-1 min-w-0 flex items-center overflow-hidden pl-[2px]">
                {(m === "sw" || m === "sel") && (m === "sel" ? <div className="w-[20px] h-[16px] bg-[#008000] border border-black shrink-0" /> : <Sw />)}
                <span className={m === "sel" ? "ml-[8px] font-bold" : m === "sw" ? "ml-[8px]" : "ml-[2px]"}>{v}</span>
                {m === "sel" && <div className="ml-auto w-[17px] h-[18px] bg-[#ddd] border border-[#666] flex items-center justify-center shrink-0"><Dn /></div>}
              </div>
            </div>
          ))}
        </div>
        <div className="flex-1 bg-[#f0f0f0] flex flex-col items-center">
          <div className="h-[16px] flex items-center"><Up c="#555" /></div>
          <div className={`w-[14px] h-[17px] mt-[26px] flex items-center justify-center ${Thumb}`}><GripV /></div>
          <div className="flex-1" />
          <div className="h-[14px]"><Dn c="#999" /></div>
        </div>
      </div>
      <div className="flex-1 border-t-2 border-[#a8a8a8] px-[5px] pt-px leading-[15px]">
        <div className="font-bold">ForeColor</div>
        <div className="mt-[4px] whitespace-nowrap">The foreground color of this</div>
        <div className="whitespace-nowrap">component, which is used to displ...</div>
      </div>
    </div>
  );
}

function Tray() {
  return (
    <div className="flex items-center ml-auto h-full pb-[2px] tracking-normal">
      <span className="text-[12px] text-[#ddd] -mt-[5px]">RU</span>
      <div className="ml-[15px] w-[107px] h-[22px] bg-white flex items-center pl-[4px] -mt-[1px] [font-family:'Liberation_Serif',serif] text-[25px] leading-[22px] overflow-hidden relative">
        <span className="text-[#cfe0f5]">G</span><span className="text-[#f8d8d4]">o</span><span className="text-[#f8eec4]">o</span><span className="text-[#cfe0f5]">g</span><span className="text-[#cfeacf]">l</span><span className="text-[#f8d8d4]">e</span>
        <div className="absolute right-[3px] top-[3px] flex items-center gap-[4px]">
          <div className="w-px h-[14px] border-l border-dotted border-[#aaa]" />
          <S w={12} h={13}><circle cx="5" cy="5" r="4" fill="#e8eef4" stroke="#555" /><path d="M8 8l4 4" stroke="#7a5020" strokeWidth="2" /></S>
        </div>
      </div>
      <span className="ml-[5px] -mt-[4px]"><Dn /></span>
      <div className="ml-[9px] w-[8px] h-[7px] border border-black border-t-2" />
      <span className="ml-[11px]"><S w={7} h={10}><path d="M6 1L2 5l4 4" stroke="#fff" strokeWidth="2" fill="none" /></S></span>
      <span className="ml-[4px]">{I.traya}</span>
      <span className="ml-[3px]">{I.trayb}</span>
      <span className="ml-px">{I.trayc}</span>
      <span className="ml-[7px]">{I.trayd}</span>
      <span className="ml-[2px]">{I.traye}</span>
      <span className="ml-[11px]">{I.trayf}</span>
      <span className="ml-[2px]">{I.trayg}</span>
      <span className="ml-[3px]">{I.trayh}</span>
      <span className="ml-[7px] mr-[14px] text-[11.5px] text-[#e8f0f8]">14:07</span>
    </div>
  );
}

function Taskbar() {
  return (
    <div className="h-[30px] shrink-0 relative flex items-center bg-[linear-gradient(180deg,#626668,#3c4042_45%,#14181a_52%,#181c1e)] border-t border-[#444]">
      <div className="absolute left-[9px] -top-[5px] w-[42px] h-[42px] rounded-full border-2 border-[#30383c] bg-[radial-gradient(circle_at_50%_30%,#5fb0d8,#1a5a88_60%,#0a2a48)] flex items-center justify-center">
        <svg width="26" height="24" viewBox="0 0 20 20" className="shrink-0 -mt-[4px]">
          <path d="M1 4q4-2 8 0v5q-4-2-8 0z" fill="#e8552a" />
          <path d="M10 4q4 2 9 0v5q-5 2-9 0z" fill="#8cc63f" />
          <path d="M1 10q4-2 8 0v6q-4-2-8 0z" fill="#3aa0e0" />
          <path d="M10 10q4 2 9 0v6q-5 2-9 0z" fill="#f5c32c" />
        </svg>
      </div>
      <div className="ml-[65px] flex gap-[7px] shrink-0">{I.ie}{I.sw}{I.desk}{I.wmp}</div>
      <div className="ml-[12px] w-[157px] h-[25px] shrink-0 rounded-[3px] border border-[#5a5e60] bg-linear-to-b from-[#4a4e50] to-[#141618] flex items-center pl-[8px] text-[12px] tracking-[-0.5px] text-[#eef2f6] whitespace-nowrap">
        {I.word}<span className="ml-[4px]">Среда программир...</span>
      </div>
      <div className="ml-[3px] w-[157px] h-[25px] shrink-0 rounded-[3px] border border-[#4a4e50] bg-linear-to-b from-[#26282a] to-[#060708] flex items-center pl-[9px] text-[12px] tracking-[-0.2px] text-[#eef2f6] whitespace-nowrap">
        <Vs /><span className="ml-[4px]">WindowsApplicatio...</span>
      </div>
      <Tray />
    </div>
  );
}

export default function App() {
  return (
    <div className="w-[1024px] h-[768px] overflow-hidden flex flex-col bg-[#f0f0f0] text-[#111] tracking-[-0.35px] [font-family:'Noto_Sans','Liberation_Sans',sans-serif]">
      <TitleBar />
      <MenuBar />
      <Toolbar1 />
      <Toolbar2 />
      <div className="flex-1 min-h-0 flex">
        <div className="w-[23px] shrink-0 pt-px">
          <div className="w-[21px] h-[103px] border border-l-0 border-[#a8a8a8] rounded-br-[4px] bg-[#f2f2f2] flex flex-col items-center pt-[5px]">
            {I.server}
            <span className="mt-[2px] [writing-mode:vertical-rl] text-[12px] tracking-[-0.55px] text-[#707070] leading-[16px] whitespace-nowrap">Server Explorer</span>
          </div>
        </div>
        <div className="w-[793px] shrink-0 flex flex-col">
          <div className="h-[492px] shrink-0 flex">
            <Toolbox />
            <Document />
          </div>
          <Output />
          <OutputTabs />
        </div>
        <div className="ml-[4px] w-[204px] shrink-0 flex flex-col">
          <SolutionExplorer />
          <PTabs />
          <Properties />
        </div>
      </div>
      <div className="h-[23px] shrink-0 border-t border-[#a8a8a8] bg-[#efebeb] pl-[9px] text-[12px] leading-[26px]">Ready</div>
      <Taskbar />
    </div>
  );
}
